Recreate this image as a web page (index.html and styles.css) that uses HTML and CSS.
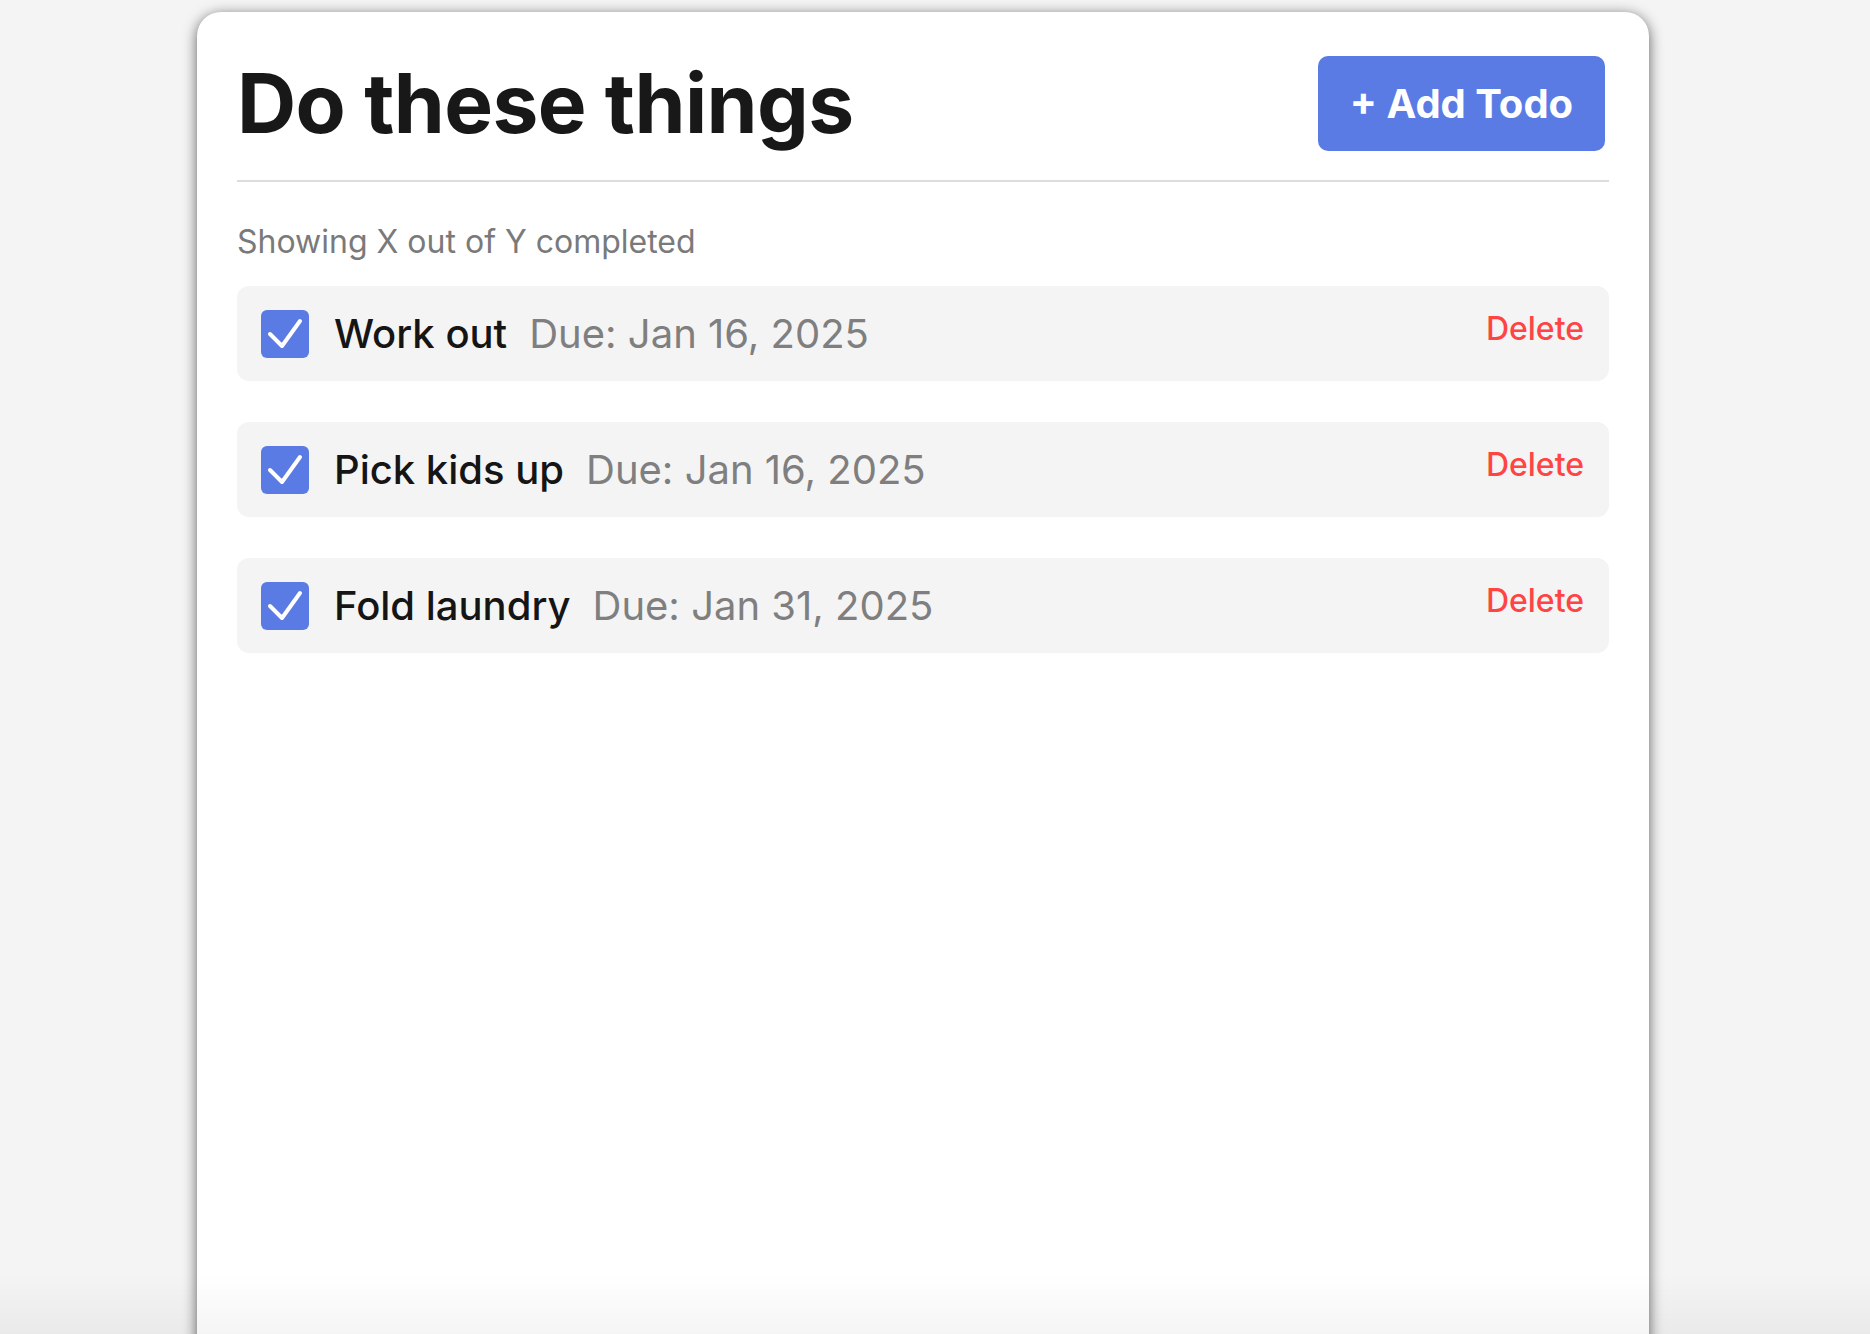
FILE: index.html
```html
<!DOCTYPE html>
<html lang="en">
<head>
<meta charset="utf-8">
<title>Do these things</title>
<link rel="stylesheet" href="styles.css">
</head>
<body>
<main class="card">
  <header class="card-header">
    <h1 class="title">Do these things</h1>
    <button class="add-btn">+ Add Todo</button>
  </header>
  <p class="summary">Showing X out of Y completed</p>
  <ul class="todo-list">
    <li class="todo">
      <span class="check"><svg viewBox="0 0 48 48"><polyline points="9,24 21,36 39,11"/></svg></span>
      <span class="todo-name">Work out</span>
      <span class="todo-due">Due: Jan 16, 2025</span>
      <button class="delete">Delete</button>
    </li>
    <li class="todo">
      <span class="check"><svg viewBox="0 0 48 48"><polyline points="9,24 21,36 39,11"/></svg></span>
      <span class="todo-name">Pick kids up</span>
      <span class="todo-due">Due: Jan 16, 2025</span>
      <button class="delete">Delete</button>
    </li>
    <li class="todo">
      <span class="check"><svg viewBox="0 0 48 48"><polyline points="9,24 21,36 39,11"/></svg></span>
      <span class="todo-name">Fold laundry</span>
      <span class="todo-due">Due: Jan 31, 2025</span>
      <button class="delete">Delete</button>
    </li>
  </ul>
</main>
<div class="bottom-fade"></div>
</body>
</html>
```

FILE: styles.css
```css
html, body {
  margin: 0;
  height: 100%;
  overflow: hidden;
}
body {
  background: #f4f4f4;
  font-family: Inter, "Noto Sans", sans-serif;
  padding: 12px 0 0 197px;
  box-sizing: border-box;
}
.card {
  width: 1452px;
  min-height: 1400px;
  box-sizing: border-box;
  background: #fff;
  border-radius: 24px;
  box-shadow: 0 3px 14px rgba(0, 0, 0, 0.62);
  padding: 44px 40px 40px 40px;
}
.card-header {
  display: flex;
  align-items: center;
  justify-content: space-between;
  padding-bottom: 29px;
  border-bottom: 2px solid #dddddd;
}
.title {
  margin: 0;
  font-size: 82px;
  font-weight: 700;
  color: #181818;
  letter-spacing: -0.6px;
  line-height: 1;
}
.add-btn {
  margin-right: 4px;
  width: 287px;
  height: 95px;
  border: none;
  border-radius: 10px;
  background: #5a7be4;
  color: #fff;
  font-family: inherit;
  font-size: 40px;
  font-weight: 700;
}
.summary {
  margin: 41px 0 26px;
  font-size: 32px;
  line-height: 37px;
  color: #7a7a7a;
}
.todo-list {
  list-style: none;
  margin: 0;
  padding: 0;
  display: flex;
  flex-direction: column;
  gap: 41px;
}
.todo {
  display: flex;
  align-items: center;
  height: 95px;
  box-sizing: border-box;
  padding: 0 25px 0 24px;
  background: #f4f4f4;
  border-radius: 12px;
}
.check {
  width: 48px;
  height: 48px;
  border-radius: 6px;
  background: #5a7be4;
  display: flex;
  flex-shrink: 0;
}
.check svg {
  width: 48px;
  height: 48px;
}
.check polyline {
  fill: none;
  stroke: #fff;
  stroke-width: 4;
  stroke-linecap: round;
  stroke-linejoin: round;
}
.todo-name {
  margin-left: 25px;
  font-size: 40px;
  font-weight: 500;
  color: #151515;
}
.todo-due {
  margin-left: 22px;
  font-size: 40px;
  color: #7f7f7f;
}
.delete {
  margin-left: auto;
  margin-bottom: 10px;
  border: none;
  background: none;
  padding: 0;
  font-family: inherit;
  font-size: 32px;
  font-weight: 500;
  color: #ff4444;
}
.bottom-fade {
  position: fixed;
  left: 0;
  right: 0;
  bottom: 0;
  height: 60px;
  background: linear-gradient(to bottom, rgba(0, 0, 0, 0), rgba(0, 0, 0, 0.04));
  pointer-events: none;
}
```
